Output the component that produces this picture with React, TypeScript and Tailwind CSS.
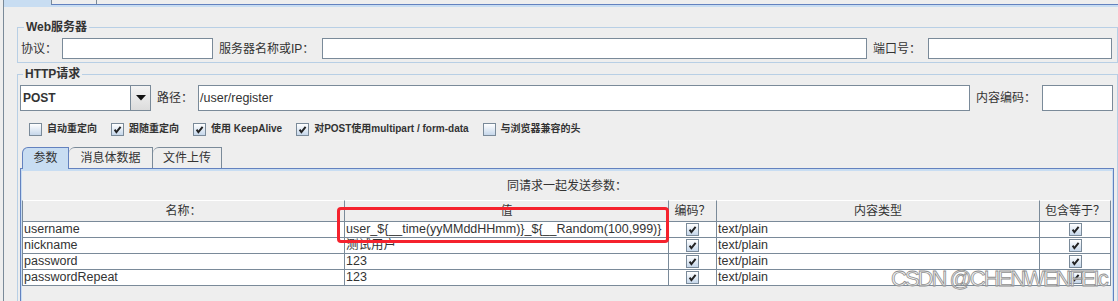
const rows = [
  ['username', 'user_${__time(yyMMddHHmm)}_${__Random(100,999)}'],
  ['nickname', '测试用户'],
  ['password', '123'],
  ['passwordRepeat', '123'],
]

function Check({ checked }: { checked?: boolean }) {
  return (
    <span className="flex h-[13px] w-[13px] shrink-0 items-center justify-center border border-[#7a8a99] bg-linear-to-b from-white to-[#c6d7ea]">
      {checked && (
        <svg width="9" height="9" viewBox="0 0 9 9">
          <path d="M1.6 4.6 L3.4 7.2 L7.6 1.8" fill="none" stroke="#222" strokeWidth="1.9" />
        </svg>
      )}
    </span>
  )
}

function CheckLabel({ checked, label }: { checked?: boolean; label: string }) {
  return (
    <div className="flex items-center gap-[5px]">
      <Check checked={checked} />
      <span className="text-[10px] font-bold leading-[16px] text-[#333]">{label}</span>
    </div>
  )
}

export default function App() {
  return (
    <div className="relative h-[301px] w-[1118px] overflow-hidden bg-[#eeeeee] font-['Liberation_Sans','Noto_Sans_CJK_SC',sans-serif] text-[12px] text-[#333]">
      {/* outer tab strip */}
      <div className="flex h-[5px]">
        <div className="w-[3px]" />
        <div className="w-[48px] border-l border-[#7a8a99] bg-[#c8ddf2]" />
        <div className="w-[46px] border-x border-b border-[#7a8a99] border-b-[#6382bf]" />
        <div className="flex-1 border-b border-[#6382bf]" />
      </div>
      <div className="ml-[3px] h-[2px] border-l border-[#7a8a99] bg-[#c8ddf2]" />

      <div className="ml-[3px] h-[300px] border-l border-[#7a8a99] pl-[13px] pt-[12px]">
        {/* Web服务器 */}
        <fieldset className="border border-[#b8cfe5] pb-[3px] pl-[3px] pr-[5px]">
          <legend className="ml-[3px] px-[2px] text-[12px] font-bold leading-[16px]">Web服务器</legend>
          <div className="mt-[3px] flex items-center">
            <span>协议：</span>
            <div className="ml-[5px] h-[21px] w-[151px] border border-[#7a8a99] bg-white" />
            <span className="ml-[6px]">服务器名称或IP：</span>
            <div className="ml-[8px] h-[21px] flex-1 border border-[#7a8a99] bg-white" />
            <span className="ml-[6px]">端口号：</span>
            <div className="ml-[7px] h-[21px] w-[184px] border border-[#7a8a99] bg-white" />
          </div>
        </fieldset>

        {/* HTTP请求 */}
        <fieldset className="mt-[3px] h-[260px] border border-[#b8cfe5] pl-[2px] pr-[3px]">
          <legend className="ml-[3px] px-[2px] text-[12px] font-bold leading-[16px]">HTTP请求</legend>
          <div className="mt-[3px] flex items-center pr-[1px]">
            <div className="flex h-[26px] w-[111px] items-center border border-[#7a8a99] bg-white pl-[2px] text-[12px] font-bold">
              POST
            </div>
            <div className="flex h-[26px] w-[20px] items-center justify-center border border-l-0 border-[#7a8a99] bg-linear-to-b from-[#f4f4f4] to-[#dcdcdc]">
              <svg width="10" height="6" viewBox="0 0 10 6">
                <path d="M0 0 H10 L5 5.5 Z" fill="#111" />
              </svg>
            </div>
            <span className="ml-[6px]">路径：</span>
            <div className="ml-[5px] flex h-[26px] flex-1 items-center border border-[#7a8a99] bg-white pl-[1px] text-[12.5px]">
              /user/register
            </div>
            <span className="ml-[6px]">内容编码：</span>
            <div className="ml-[6px] h-[26px] w-[71px] border border-[#7a8a99] bg-white" />
          </div>

          <div className="ml-[9px] mt-[10px] flex h-[16px] items-center gap-[14px]">
            <CheckLabel label="自动重定向" />
            <CheckLabel checked label="跟随重定向" />
            <CheckLabel checked label="使用 KeepAlive" />
            <CheckLabel checked label="对POST使用multipart / form-data" />
            <CheckLabel label="与浏览器兼容的头" />
          </div>

          {/* tabs */}
          <div className="ml-[2px] mt-[10px] flex items-end">
            <div className="relative z-10 -mb-px flex h-[22px] w-[47px] items-center justify-center rounded-tl-[6px] border-x border-t border-[#6382bf] bg-[#c8ddf2] pb-px">
              参数
            </div>
            <div className="flex h-[21px] w-[84px] items-center justify-center rounded-tl-[6px] border-r border-t border-[#7a8a99]">
              消息体数据
            </div>
            <div className="flex h-[21px] w-[69px] items-center justify-center rounded-tl-[6px] border-r border-t border-[#7a8a99]">
              文件上传
            </div>
          </div>

          {/* tab panel */}
          <div className="h-[140px] border-x border-t border-[#6382bf]">
            <div className="h-full border-x border-t-2 border-[#c8ddf2]">
              <div className="flex h-[29px] items-center justify-center">同请求一起发送参数：</div>
              <div className="grid grid-cols-[323px_324px_48px_323px_71px]">
                {['名称：', '值', '编码？', '内容类型', '包含等于？'].map((h, i) => (
                  <div
                    key={h}
                    className={
                      'flex h-[22px] items-center justify-center border-r border-b border-t border-[#7a8a99] border-t-white bg-[#eeeeee] ' +
                      (i === 0 ? 'border-l' : '')
                    }
                  >
                    {h}
                  </div>
                ))}
                {rows.map(([name, value]) => (
                  <div key={name} className="contents">
                    <div className="h-[16px] border-x border-b border-[#7a8a99] bg-white px-[1px] text-[12.5px] leading-[15px]">
                      {name}
                    </div>
                    <div className="h-[16px] overflow-hidden border-r border-b border-[#7a8a99] bg-white px-[1px] text-[12.5px] leading-[15px]">
                      {value}
                    </div>
                    <div className="flex h-[16px] items-center justify-center border-r border-b border-[#7a8a99] bg-white">
                      <Check checked />
                    </div>
                    <div className="h-[16px] border-r border-b border-[#7a8a99] bg-white px-[1px] text-[12.5px] leading-[15px]">
                      text/plain
                    </div>
                    <div className="flex h-[16px] items-center justify-center border-r border-b border-[#7a8a99] bg-white">
                      <Check checked />
                    </div>
                  </div>
                ))}
              </div>
            </div>
          </div>
        </fieldset>
      </div>

      {/* red highlight */}
      <div className="absolute left-[337px] top-[207px] h-[36px] w-[332px] rounded-[4px] border-[3px] border-[#f5222d]" />

      {/* watermark */}
      <div className="absolute left-[891px] top-[264px] whitespace-nowrap text-[22px] leading-[30px] tracking-[-2px] text-[#f2f2f2]/80 [-webkit-text-stroke:0.8px_#8f8f8f]">
        CSDN @CHENWENFEIc
      </div>
    </div>
  )
}
